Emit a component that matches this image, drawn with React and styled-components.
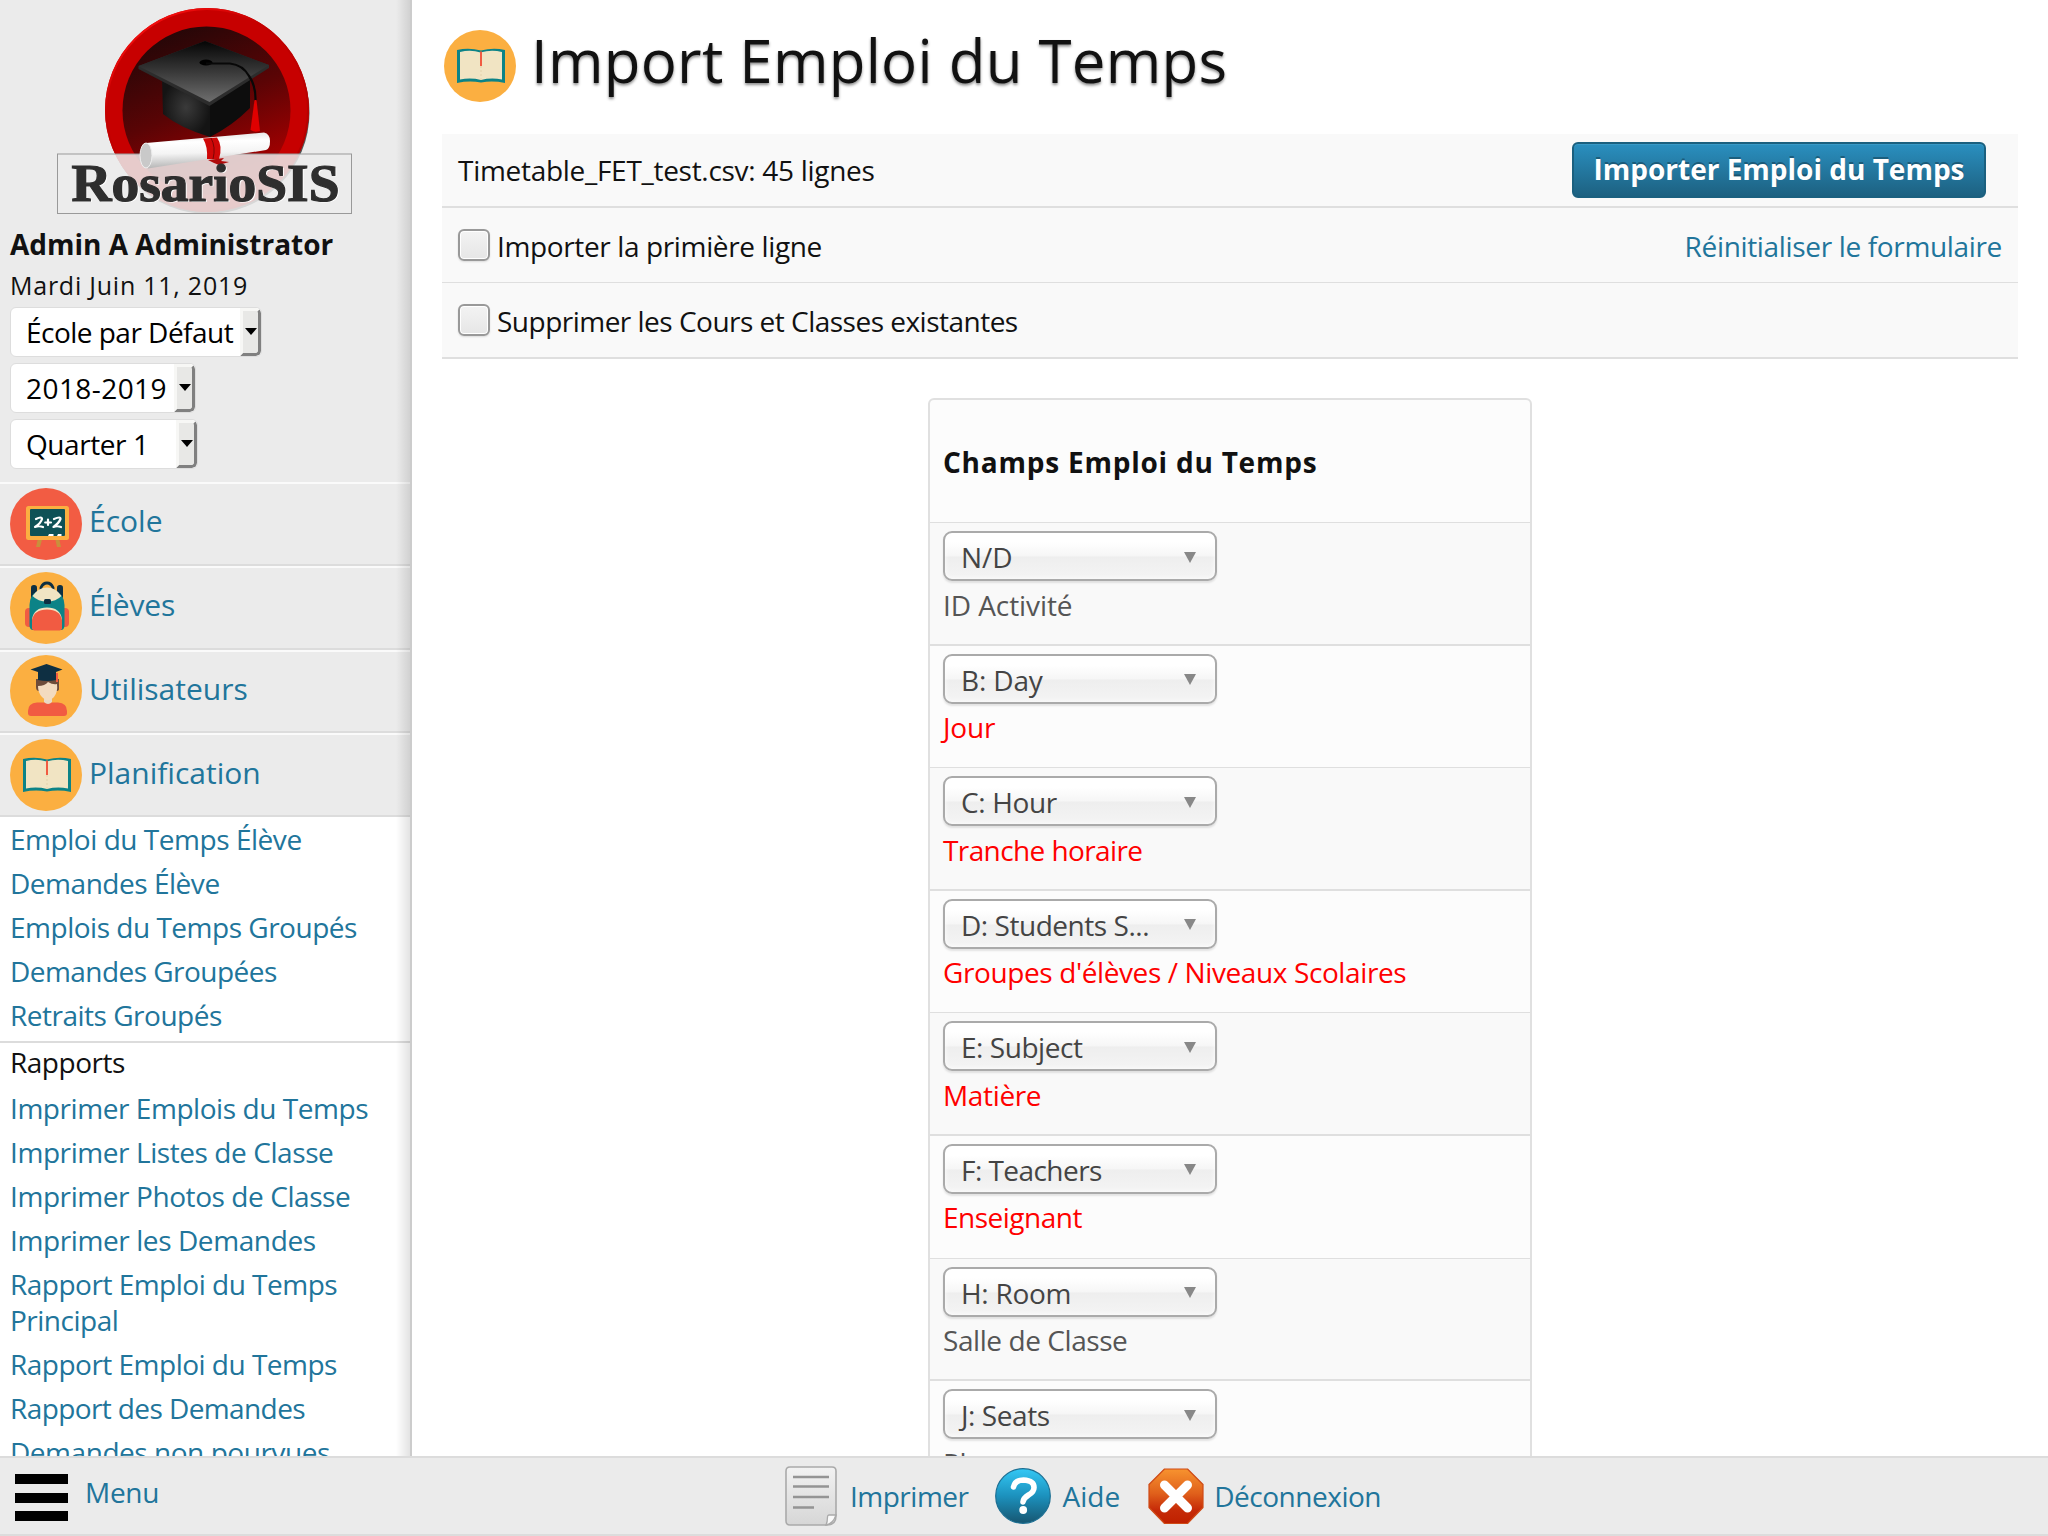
import React from "react";
import styled, { createGlobalStyle } from "styled-components";

const GlobalStyle = createGlobalStyle`
  * { box-sizing: border-box; }
  html, body { margin: 0; padding: 0; background: #fff; overflow: hidden; }
  body { font-family: "Open Sans", "Noto Sans", sans-serif; font-size: 28px; color: #111; }
`;

const link = "#21759b";

const Shell = styled.div`
  display: grid;
  grid-template: minmax(0, 1456px) 80px / 412px minmax(0, 1fr);
  width: 2048px;
  height: 1536px;
  overflow: hidden;
`;

/* ---------- sidebar ---------- */
const Sidebar = styled.aside`
  position: relative;
  overflow: hidden;
  border-right: 2px solid #ccc;
  background: #fff;
  &::after {
    content: "";
    position: absolute;
    inset: 0 0 0 auto;
    width: 14px;
    background: linear-gradient(to right, rgba(0, 0, 0, 0), rgba(0, 0, 0, 0.11));
    pointer-events: none;
  }
`;
const SideHead = styled.div`
  height: 482px;
  background: #ebebeb;
  padding-left: 10px;
`;
const LogoBox = styled.div`
  height: 223px;
  margin-left: -10px;
  svg { display: block; }
`;
const UserName = styled.div`
  font-size: 28px;
  font-weight: 700;
  line-height: 42px;
`;
const DateLine = styled.div`
  font-size: 25px;
  line-height: 40px;
  letter-spacing: 0.76px;
`;
const Selects = styled.div`
  display: flex;
  flex-direction: column;
  gap: 6px;
  padding-top: 2px;
`;
const SideSelect = styled.div`
  display: flex;
  justify-content: space-between;
  width: ${(p) => p.$w}px;
  height: 50px;
  border: 1px solid #ddd;
  border-radius: 6px;
  background: #fff;
  color: #000;
  line-height: 49px;
  padding-left: 15px;
  white-space: nowrap;
  letter-spacing: ${(p) => p.$ls || 0}px;
  overflow: hidden;
`;
const ArrowButton = styled.span`
  display: flex;
  align-items: center;
  justify-content: center;
  width: 21px;
  flex: none;
  border: 3px solid;
  border-color: #f7f7f5 #808080 #808080 #f7f7f5;
  border-radius: 0 5px 5px 0;
  background: #e8e8e6;
  &::before {
    content: "";
    border: 6px solid transparent;
    border-top: 7px solid #000;
    border-bottom: 0;
    margin-top: -2px;
  }
`;
const ModuleRow = styled.a`
  display: flex;
  align-items: center;
  height: 83.75px;
  padding-left: 10px;
  gap: 7px;
  background: #ebebeb;
  border-top: 2px solid #fafafa;
  border-bottom: 2px solid #dcdcdc;
  color: ${link};
`;
const ModuleName = styled.span`
  font-size: 30px;
  line-height: 40px;
  padding-bottom: 5px;
  letter-spacing: ${(p) => p.$ls || 0}px;
`;
const SubItem = styled.a`
  display: block;
  padding: 4px 10px;
  line-height: 36px;
  color: ${link};
  letter-spacing: ${(p) => p.$ls || 0}px;
`;
const SubTitle = styled.div`
  margin-top: 4px;
  border-top: 2px solid #dcdcdc;
  padding: 0 10px 5px;
  line-height: 38px;
  letter-spacing: -0.49px;
`;

/* ---------- main ---------- */
const Main = styled.main`
  overflow: hidden;
  padding: 0 30px;
`;
const TitleBar = styled.header`
  display: flex;
  align-items: flex-start;
  height: 134px;
  padding: 30px 0 0 2px;
  gap: 15px;
`;
const Title = styled.h1`
  margin: -10px 0 0;
  font-size: 60px;
  font-weight: 400;
  line-height: 80px;
  letter-spacing: 0.25px;
  text-shadow: 0 2px 3px rgba(0, 0, 0, 0.45);
  white-space: nowrap;
`;
const FormRow = styled.div`
  display: flex;
  align-items: center;
  justify-content: space-between;
  height: ${(p) => p.$h}px;
  padding: 0 16px;
  background: #f9f9f9;
  border-bottom: ${(p) => p.$b || 2}px solid #dfdfdf;
`;
const RowText = styled.span`
  line-height: 40px;
  letter-spacing: ${(p) => p.$ls || 0}px;
  padding-top: ${(p) => p.$pt ?? 2}px;
`;
const CheckLabel = styled.label`
  display: flex;
  align-items: center;
  gap: 7px;
`;
const CheckBox = styled.span`
  width: 32px;
  height: 32px;
  border: 2px solid #999;
  border-radius: 6px;
  background: linear-gradient(#f3f3f3, #e6e6e6);
  box-shadow: inset 0 0 0 1px #fff, 0 1px 2px rgba(0, 0, 0, 0.12);
`;
const ImportButton = styled.button`
  width: 414px;
  height: 56px;
  margin-right: 16px;
  padding: 0 0 3px;
  border: 2px solid #1b607f;
  border-radius: 6px;
  background: linear-gradient(#2a8fbf, #1d6181);
  box-shadow: inset 0 1px 0 rgba(120, 200, 230, 0.2);
  color: #fff;
  font: 700 28px/40px "Open Sans", "Noto Sans", sans-serif;
  text-shadow: 0 -2px 0 rgba(0, 0, 0, 0.3);
  white-space: nowrap;
`;
const ResetLink = styled.a`
  color: ${link};
  line-height: 40px;
  padding-top: 2px;
  letter-spacing: -0.34px;
`;
const FieldTable = styled.section`
  width: 604px;
  margin: 39px auto 0;
  border: 2px solid #e0e0e0;
  border-radius: 6px;
  background: #fcfcfc;
`;
const FieldHead = styled.div`
  height: 123px;
  padding: 42px 13px 0;
  font-weight: 700;
  line-height: 40px;
  letter-spacing: 0.77px;
  border-bottom: 1px solid #dfdfdf;
`;
const FieldRow = styled.div`
  height: 122.6px;
  padding: 8px 13px 0;
  background: ${(p) => (p.$odd ? "#f9f9f9" : "#fcfcfc")};
  border-bottom: ${(p) => (p.$odd ? 2 : 1)}px solid #dfdfdf;
`;
const Dropdown = styled.div`
  display: flex;
  align-items: center;
  justify-content: space-between;
  width: 274px;
  height: 50px;
  padding: 0 19px 0 16px;
  border: 2px solid #aaa;
  border-radius: 9px;
  background: linear-gradient(#fff 20%, #f6f6f6 50%, #eee 52%, #f4f4f4 100%);
  box-shadow: inset 0 0 5px #fff, 0 2px 2px rgba(0, 0, 0, 0.1);
  color: #444;
  line-height: 46px;
  letter-spacing: ${(p) => p.$ls || 0}px;
  span { padding-top: 2px; }
  &::after {
    content: "";
    border: 6.5px solid transparent;
    border-top: 11px solid #888;
    border-bottom: 0;
    margin-top: 2px;
  }
`;
const FieldLabel = styled.div`
  margin-top: 3.5px;
  line-height: 40px;
  color: ${(p) => (p.$required ? "#f00" : "#555")};
  letter-spacing: ${(p) => p.$ls || 0}px;
`;

/* ---------- footer ---------- */
const Footer = styled.footer`
  grid-column: 1 / -1;
  display: flex;
  align-items: flex-start;
  background: #ebebeb;
  border-top: 2px solid #dcdcdc;
  border-bottom: 2px solid #dcdcdc;
  color: ${link};
`;
const MenuToggle = styled.a`
  display: flex;
  width: 785px;
  padding: 16px 0 0 15px;
  gap: 17px;
`;
const Bars = styled.span`
  display: grid;
  gap: 8.5px;
  width: 53px;
  i { display: block; height: 10px; background: #000; }
`;
const MenuText = styled.span`
  margin-top: -2px;
  line-height: 40px;
  letter-spacing: -0.3px;
`;
const FootLink = styled.a`
  display: flex;
  align-items: center;
  height: 76px;
  gap: ${(p) => p.$gap}px;
  margin-right: ${(p) => p.$mr || 0}px;
  letter-spacing: ${(p) => p.$ls || 0}px;
  span { line-height: 40px; }
`;

/* ---------- drawings ---------- */
const Badge = styled.svg`
  flex: none;
  display: block;
  width: 72px;
  height: 72px;
`;

const BookIcon = () => (
  <Badge viewBox="0 0 72 72">
    <circle cx="36" cy="36" r="36" fill="#fbaf41" />
    <path d="M13 20 Q25 17.5 37 20.5 Q49 17.5 61 20 V53 Q49 50.500 37 52.500 Q25 50.500 13 53Z" fill="#0c8387" />
    <path d="M16 22 Q27 19.500 36.500 22.500 Q47 19.500 58 22 V49.500 Q47 47.500 37 50 Q27 47.500 16 49.500Z" fill="#f1e4c3" />
    <path d="M37 36V50" stroke="#e3d2ab" strokeWidth="1" strokeDasharray="2 2" />
    <path d="M37 21.500V36" stroke="#f15b42" strokeWidth="2" />
  </Badge>
);

const BoardIcon = () => (
  <Badge viewBox="0 0 72 72">
    <circle cx="36" cy="36" r="36" fill="#f25c43" />
    <path d="M28 50L26 59H30L32.500 50ZM45 50L47 59H51L49 50Z" fill="#c98f3c" />
    <rect x="16" y="18" width="43" height="34" rx="2.500" fill="#fbaf41" />
    <rect x="20" y="21" width="35" height="27" rx="1" fill="#0e5156" />
    <g fill="none" stroke="#fff" strokeLinecap="round" strokeLinejoin="round" strokeWidth="2.200">
      <path d="M26 31Q32 28 32 31Q31 35 25 39Q29 37.500 33 39" />
      <path d="M38 31.500V37M35.200 34.500H41" />
      <path d="M44 31Q51 28 50.500 31Q49 35 43.500 39Q47 37.500 51 39" />
    </g>
    <path d="M39 46H43.500V48H38ZM48 46H51.500V48H47Z" fill="#fff" />
  </Badge>
);

const BackpackIcon = () => (
  <Badge viewBox="0 0 72 72">
    <circle cx="36" cy="36" r="36" fill="#fbaf41" />
    <path d="M31 18V15.500Q33 11 37 11Q41 11 43 15.500V18" fill="none" stroke="#0e2f42" strokeWidth="2.800" />
    <rect x="21" y="13" width="6" height="14" rx="2.800" fill="#0e2f42" />
    <rect x="47" y="13" width="6" height="14" rx="2.800" fill="#0e2f42" />
    <rect x="15" y="36" width="44" height="19" rx="4" fill="#f15b42" />
    <path d="M19.500 54V33Q20 22 27 20H46Q54 22 54.500 33V54Q54 58 51 58H23Q20 58 19.500 54Z" fill="#0c8387" />
    <path d="M22.500 24Q28 15.500 37 15.500Q46 15.500 51.500 24Q46 29.500 37 29.500Q28 29.500 22.500 24Z" fill="#f1e4c3" />
    <rect x="34" y="27" width="7" height="5" rx="1.500" fill="#0e2f42" />
    <path d="M22 52V47Q24 35.500 37 35.500Q50 35.500 52 47V52" fill="#f1e4c3" />
    <path d="M22 48Q24 37.500 37 37.500Q50 37.500 52 48V57L50 58.500H24L22 57Z" fill="#f15b42" />
  </Badge>
);

const UserIcon = () => (
  <Badge viewBox="0 0 72 72">
    <circle cx="36" cy="36" r="36" fill="#fbaf41" />
    <path d="M26 24H49V34Q49 36 46 36H29Q26 36 26 32Z" fill="#6e4c3a" />
    <path d="M18 56Q18 48 27 47.500H48Q57 48 57 56V58Q57 61 54 61H21Q18 61 18 58Z" fill="#f15b42" />
    <path d="M34 43H42V47Q38 51 34 47Z" fill="#e8d9c6" />
    <path d="M28 31Q35 31 38 27Q43 30 47 29Q48 37 44 42Q38 49 32 42Q28 38 28 31Z" fill="#f3dbc0" />
    <path d="M46 18H48V27H46Z" fill="#f15b42" />
    <path d="M20.500 14.500L36.500 9L52.500 14.500L46 17V25Q37 27 28 25V17Z" fill="#0e2f42" />
  </Badge>
);

const Logo = () => (
  <svg width="410" height="222" viewBox="0 0 410 222">
    <defs>
      <linearGradient id="well" x1="0.2" y1="0" x2="0.6" y2="1">
        <stop offset="0" stopColor="#1f0708" />
        <stop offset="0.5" stopColor="#5a0405" />
        <stop offset="1" stopColor="#b00000" />
      </linearGradient>
      <linearGradient id="board" x1="0" y1="0" x2="0" y2="1">
        <stop offset="0" stopColor="#050505" />
        <stop offset="0.5" stopColor="#383838" />
        <stop offset="1" stopColor="#6e6e6e" />
      </linearGradient>
      <radialGradient id="side">
        <stop offset="0" stopColor="#3a3a3a" />
        <stop offset="1" stopColor="#141414" />
      </radialGradient>
      <linearGradient id="paper" x1="0" y1="0" x2="0.1" y2="1">
        <stop offset="0" stopColor="#dedede" />
        <stop offset="0.3" stopColor="#ffffff" />
        <stop offset="0.6" stopColor="#f4f4f4" />
        <stop offset="1" stopColor="#b5b5b5" />
      </linearGradient>
      <linearGradient id="rim" x1="0.2" y1="0" x2="0.8" y2="1">
        <stop offset="0" stopColor="#ff1010" />
        <stop offset="0.3" stopColor="#c40000" />
        <stop offset="1" stopColor="#b00000" />
      </linearGradient>
    </defs>
    <circle cx="208" cy="112.500" r="101.500" fill="#555" />
    <circle cx="207" cy="110" r="102" fill="#c70000" />
    <circle cx="207" cy="110" r="101" fill="none" stroke="url(#rim)" strokeWidth="2" />
    <circle cx="206.500" cy="110.500" r="84" fill="url(#well)" />
    <path d="M162 78L210 100V137Q180 128 163 114Z" fill="url(#side)" />
    <path d="M210 100L250 78V108Q232 126 210 137Z" fill="#0d0d0d" />
    <path d="M138.500 66L205 41L269 65V68L209.500 106L138.500 69Z" fill="#2c2c2c" />
    <path d="M138.500 66L205 41L269 65L209.500 102Z" fill="url(#board)" />
    <ellipse cx="206" cy="62.500" rx="6.500" ry="3" fill="#000" />
    <path d="M206 63.500H230Q243 65 249 76Q256 86 255.500 101" fill="none" stroke="#080808" strokeWidth="2.200" />
    <path d="M254.500 100L250.500 130Q255 133 260 131L256.500 100Z" fill="#e00000" />
    <rect x="57.500" y="154" width="294" height="59.500" fill="#ececec" fillOpacity="0.86" stroke="#999" />
    <path d="M146 143L264 132.500Q270 134 270 141Q270 149 266 150L148 168.500Z" fill="url(#paper)" />
    <ellipse cx="146" cy="155.500" rx="6" ry="12.500" fill="#c9c9c9" stroke="#eee" />
    <path d="M203 138.500Q208 147 207 159H219Q223 146 217 137.500Z" fill="#cf0808" />
    <path d="M211 138Q216 147 213 159" fill="none" stroke="#7a0505" />
    <path d="M208 160L224 158L221 161L229 162L219 165L214 163Z" fill="#b00b0b" />
    <g fontFamily="Liberation Serif" fontWeight="700" fontSize="52">
      <text x="73" y="202" textLength="268" lengthAdjust="spacingAndGlyphs" fill="#fff">RosarioSIS</text>
      <text x="71.500" y="200.500" textLength="268" lengthAdjust="spacingAndGlyphs" fill="#2e2e2e" stroke="#2e2e2e" strokeWidth="1.200">RosarioSIS</text>
    </g>
  </svg>
);

const PrintIcon = () => (
  <svg width="52" height="60" viewBox="0 0 52 60">
    <defs>
      <linearGradient id="sheet" x1="0" y1="0" x2="0" y2="1">
        <stop offset="0" stopColor="#f2f2f2" />
        <stop offset="1" stopColor="#d6d6d6" />
      </linearGradient>
    </defs>
    <path d="M5 1H47Q51 1 51 5V50Q51 59 42 59H5Q1 59 1 55V5Q1 1 5 1Z" fill="url(#sheet)" stroke="#aaa" strokeWidth="1.600" />
    <path d="M51 49H44Q42.500 49 42.500 51Q42.500 56 41 59Q48 58 51 49Z" fill="#fafafa" stroke="#aaa" strokeWidth="1.300" />
    <path d="M8 11H44M8 20.500H44M8 31H44M8 41.500H29" stroke="#949494" strokeWidth="2.600" />
  </svg>
);

const HelpIcon = () => (
  <svg width="56" height="56" viewBox="0 0 56 56">
    <defs>
      <linearGradient id="help" x1="0" y1="0" x2="0" y2="1">
        <stop offset="0" stopColor="#33c8f5" />
        <stop offset="0.5" stopColor="#1c91bd" />
        <stop offset="1" stopColor="#175671" />
      </linearGradient>
    </defs>
    <circle cx="28" cy="28" r="27.300" fill="url(#help)" stroke="#1c6f93" strokeWidth="1.200" />
    <path d="M18.500 19Q20 12 28.500 12Q39 12.500 39 19.500Q39 24 33.500 27Q28.500 30 28 34" fill="none" stroke="#fff" strokeWidth="5.600" strokeLinecap="round" />
    <circle cx="28.200" cy="42" r="3.900" fill="#fff" />
  </svg>
);

const LogoutIcon = () => (
  <svg width="56" height="56" viewBox="0 0 56 56">
    <defs>
      <linearGradient id="stop" x1="0" y1="0" x2="0" y2="1">
        <stop offset="0" stopColor="#f7932f" />
        <stop offset="0.45" stopColor="#e0601b" />
        <stop offset="0.75" stopColor="#c62b08" />
        <stop offset="1" stopColor="#bf2000" />
      </linearGradient>
    </defs>
    <path d="M16.500 1H39.500L55 16.500V39.500L39.500 55.500H16.500L1 39.500V16.500Z" fill="url(#stop)" stroke="#cf4a16" strokeWidth="1.200" strokeLinejoin="round" />
    <path d="M16.500 17L39.500 40M39.500 17L16.500 40" stroke="#fff" strokeWidth="9" strokeLinecap="round" />
  </svg>
);

const modules = [
  ["École", BoardIcon, 0],
  ["Élèves", BackpackIcon, -0.2],
  ["Utilisateurs", UserIcon, 0],
  ["Planification", BookIcon, 0],
];
const planning = [
  ["Emploi du Temps Élève", -0.46],
  ["Demandes Élève", -0.47],
  ["Emplois du Temps Groupés", -0.49],
  ["Demandes Groupées", -0.54],
  ["Retraits Groupés", -0.49],
];
const reports = [
  ["Imprimer Emplois du Temps", -0.44],
  ["Imprimer Listes de Classe", -0.42],
  ["Imprimer Photos de Classe", -0.42],
  ["Imprimer les Demandes", -0.4],
  ["Rapport Emploi du Temps Principal", -0.5],
  ["Rapport Emploi du Temps", -0.51],
  ["Rapport des Demandes", -0.6],
  ["Demandes non pourvues", -0.46],
];
const fields = [
  { value: "N/D", vs: 0, label: "ID Activité", ls: -0.08 },
  { value: "B: Day", vs: -0.15, label: "Jour", ls: -0.2, required: true },
  { value: "C: Hour", vs: -0.35, label: "Tranche horaire", ls: -0.6, required: true },
  { value: "D: Students S...", vs: -0.46, label: "Groupes d'élèves / Niveaux Scolaires", ls: -0.39, required: true },
  { value: "E: Subject", vs: -0.46, label: "Matière", ls: -0.35, required: true },
  { value: "F: Teachers", vs: -0.55, label: "Enseignant", ls: -0.5, required: true },
  { value: "H: Room", vs: -0.28, label: "Salle de Classe", ls: -0.43 },
  { value: "J: Seats", vs: -0.43, label: "Places", ls: -0.3 },
];

export default function App() {
  return (
    <>
      <GlobalStyle />
      <Shell>
        <Sidebar>
          <SideHead>
            <LogoBox><Logo /></LogoBox>
            <UserName>Admin A Administrator</UserName>
            <DateLine>Mardi Juin 11, 2019</DateLine>
            <Selects>
              <SideSelect $w={252} $ls={-0.52}>École par Défaut<ArrowButton /></SideSelect>
              <SideSelect $w={186} $ls={0.43}>2018-2019<ArrowButton /></SideSelect>
              <SideSelect $w={188} $ls={-0.43}>Quarter 1<ArrowButton /></SideSelect>
            </Selects>
          </SideHead>
          {modules.map(([name, Icon, ls]) => (
            <ModuleRow key={name}><Icon /><ModuleName $ls={ls}>{name}</ModuleName></ModuleRow>
          ))}
          {planning.map(([t, ls]) => <SubItem key={t} $ls={ls}>{t}</SubItem>)}
          <SubTitle>Rapports</SubTitle>
          {reports.map(([t, ls]) => <SubItem key={t} $ls={ls}>{t}</SubItem>)}
        </Sidebar>
        <Main>
          <TitleBar><BookIcon /><Title>Import Emploi du Temps</Title></TitleBar>
          <FormRow $h={74}>
            <RowText $ls={-0.29} $pt={0}>Timetable_FET_test.csv: 45 lignes</RowText>
            <ImportButton>Importer Emploi du Temps</ImportButton>
          </FormRow>
          <FormRow $h={75} $b={1}>
            <CheckLabel><CheckBox /><RowText $ls={-0.37}>Importer la primière ligne</RowText></CheckLabel>
            <ResetLink>Réinitialiser le formulaire</ResetLink>
          </FormRow>
          <FormRow $h={76}>
            <CheckLabel><CheckBox /><RowText $ls={-0.51}>Supprimer les Cours et Classes existantes</RowText></CheckLabel>
          </FormRow>
          <FieldTable>
            <FieldHead>Champs Emploi du Temps</FieldHead>
            {fields.map((f, i) => (
              <FieldRow key={f.label} $odd={i % 2 === 0}>
                <Dropdown $ls={f.vs}><span>{f.value}</span></Dropdown>
                <FieldLabel $required={f.required} $ls={f.ls}>{f.label}</FieldLabel>
              </FieldRow>
            ))}
          </FieldTable>
        </Main>
        <Footer>
          <MenuToggle><Bars><i /><i /><i /></Bars><MenuText>Menu</MenuText></MenuToggle>
          <FootLink $gap={13} $mr={27} $ls={-0.5}><PrintIcon /><span>Imprimer</span></FootLink>
          <FootLink $gap={11} $mr={28}><HelpIcon /><span>Aide</span></FootLink>
          <FootLink $gap={10} $ls={-0.47}><LogoutIcon /><span>Déconnexion</span></FootLink>
        </Footer>
      </Shell>
    </>
  );
}
